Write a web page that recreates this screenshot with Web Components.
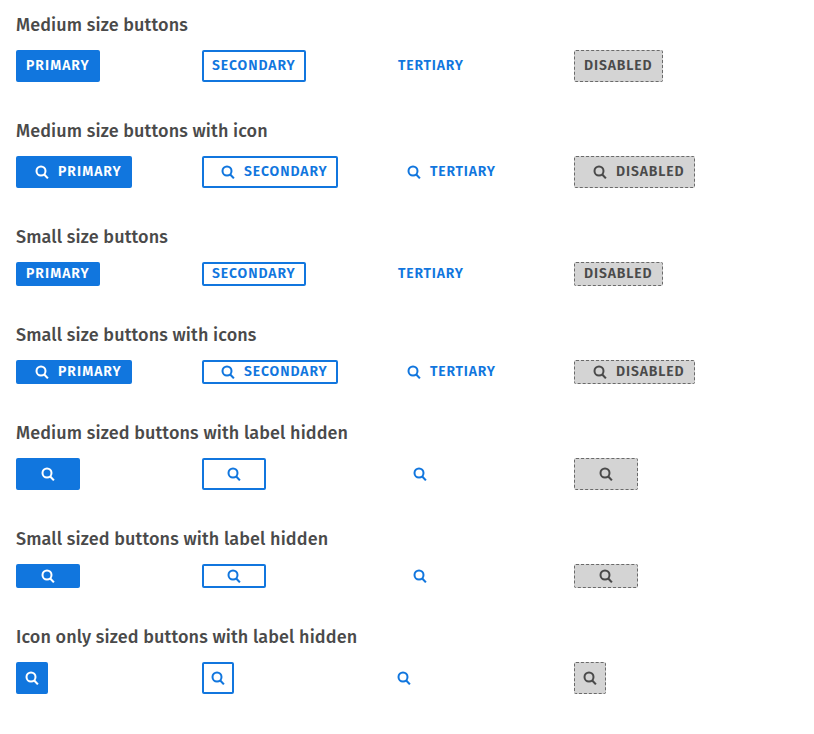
<!DOCTYPE html>
<html lang="en">
<head>
<meta charset="utf-8">
<title>Buttons</title>
<style>
body { margin: 0; background: #fff; color: #4a4a4a; font-family: "Fira Sans", "Noto Sans", sans-serif; }
</style>
</head>
<body>
<button-gallery></button-gallery>
<script>
class SearchIcon extends HTMLElement {
  connectedCallback() {
    this.attachShadow({ mode: 'open' }).innerHTML = `
      <style>:host{display:block;width:32px;height:32px;flex:none}svg{display:block}</style>
      <svg width="32" height="32" viewBox="0 0 32 32" fill="none" stroke="currentColor">
        <circle cx="15" cy="15" r="4.5" stroke-width="2"/>
        <path d="M18 18.2 21.9 22.4" stroke-width="2.1"/>
      </svg>`;
  }
}

class UiButton extends HTMLElement {
  connectedCallback() {
    this.attachShadow({ mode: 'open' }).innerHTML = `
      <style>
        :host{display:block}
        button{display:flex;align-items:center;justify-content:center;box-sizing:border-box;
          height:32px;padding:0 8px;margin:0;border:2px solid #1176de;border-radius:2px;
          background:#1176de;color:#fff;font-family:inherit;font-size:14px;font-weight:600;
          line-height:20px;letter-spacing:1.03px;white-space:nowrap}
        :host([kind=secondary]) button{background:#fff;color:#1176de;letter-spacing:.91px}
        :host([kind=tertiary]) button{background:transparent;border-color:transparent;color:#1176de;letter-spacing:.8px}
        :host([kind=disabled]) button{background:#d4d4d4;border:1px dashed #6a6a6a;padding:0 9px;color:#4a4a4a;letter-spacing:.89px}
        :host([size=small]) button{height:24px}
        :host([hide]) button{width:64px;padding:0}
        :host([hide=square]) button{width:32px}
      </style>
      <button aria-label="${this.getAttribute('kind')}">
        ${this.hasAttribute('icon') ? '<search-icon></search-icon>' : ''}
        ${this.hasAttribute('hide') ? '' : '<span><slot></slot></span>'}
      </button>`;
  }
}

class ButtonSection extends HTMLElement {
  connectedCallback() {
    this.attachShadow({ mode: 'open' }).innerHTML = `
      <style>
        :host{display:block}
        h2{margin:0 0 13px;font-size:18px;font-weight:500;line-height:24px;letter-spacing:.11px}
        div{display:grid;grid-template-columns:repeat(4,186px);justify-items:start}
      </style>
      <h2>${this.getAttribute('heading')}</h2>
      <div><slot></slot></div>`;
  }
}

class ButtonGallery extends HTMLElement {
  connectedCallback() {
    const rows = [
      ['Medium size buttons', ''],
      ['Medium size buttons with icon', 'icon'],
      ['Small size buttons', 'size="small"'],
      ['Small size buttons with icons', 'size="small" icon'],
      ['Medium sized buttons with label hidden', 'icon hide'],
      ['Small sized buttons with label hidden', 'size="small" icon hide'],
      ['Icon only sized buttons with label hidden', 'icon hide="square"']
    ];
    const kinds = ['primary', 'secondary', 'tertiary', 'disabled'];
    this.attachShadow({ mode: 'open' }).innerHTML = `
      <style>:host{display:flex;flex-direction:column;gap:37px;padding:13px 16px 0}</style>
      ${rows.map(([heading, attrs]) => `<button-section heading="${heading}">
        ${kinds.map(k => `<ui-button kind="${k}" ${attrs}>${attrs.includes('hide') ? '' : k.toUpperCase()}</ui-button>`).join('')}
      </button-section>`).join('')}`;
  }
}

customElements.define('search-icon', SearchIcon);
customElements.define('ui-button', UiButton);
customElements.define('button-section', ButtonSection);
customElements.define('button-gallery', ButtonGallery);
</script>
</body>
</html>
